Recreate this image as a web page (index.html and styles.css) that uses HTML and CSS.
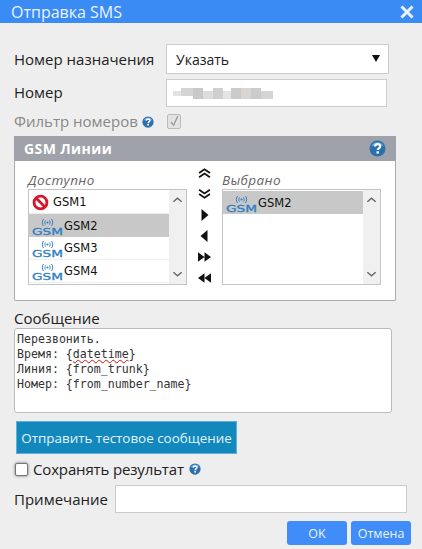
FILE: index.html

```html
<!DOCTYPE html>
<html lang="en">
<head>
    <meta charset="UTF-8">
    <meta name="viewport" content="width=device-width, initial-scale=1.0">
    <title>Отправка SMS</title>
    <link rel="stylesheet" href="styles.css">
</head>
<body>
    <svg class="defs" width="0" height="0">
        <symbol id="waves" viewBox="0 0 31 22">
            <g fill="none" stroke="#2f7fc4" stroke-width="1">
                <path d="M11.500 4c-1.500 2-1.500 5 0 7M19.500 4c1.500 2 1.500 5 0 7"/>
                <path d="M13.500 5.500c-.8 1-.8 3 0 4M17.500 5.500c.8 1 .8 3 0 4"/>
            </g>
            <circle cx="15.500" cy="7.500" r="1" fill="#2f7fc4"/>
        </symbol>
        <symbol id="help" viewBox="0 0 16 16">
            <circle cx="8" cy="8" r="7.500" fill="#2a70ad"/>
            <path d="M2 6a6.500 6.500 0 0 1 12 0c-3-1.500-9-1.500-12 0z" fill="#6fa8d8"/>
            <path d="M5.700 6.200c0-3 4.800-3 4.800-.2 0 1.800-2.300 1.800-2.300 3.500" fill="none" stroke="#fff" stroke-width="2"/>
            <rect x="7.100" y="10.600" width="2.200" height="2.200" fill="#fff"/>
        </symbol>
        <symbol id="chev-up" viewBox="0 0 12 8">
            <path d="M1.500 6L6 2l4.500 4" fill="none" stroke="#666" stroke-width="1.500"/>
        </symbol>
        <symbol id="chev-down" viewBox="0 0 12 8">
            <path d="M1.500 2L6 6l4.500-4" fill="none" stroke="#666" stroke-width="1.500"/>
        </symbol>
    </svg>

    <div class="dialog">
        <div class="title-bar">
            <span>Отправка SMS</span>
            <svg class="close" viewBox="0 0 14 14"><path d="M1.500 1.500l11 11M12.500 1.500l-11 11" stroke="#eaf3ff" stroke-width="3"/></svg>
        </div>

        <div class="content">
            <div class="row row-select">
                <label class="row-label">Номер назначения</label>
                <div class="fake-select">Указать<span class="select-arrow"></span></div>
            </div>
            <div class="row row-number">
                <label class="row-label">Номер</label>
                <div class="text-input number-input">
                    <svg class="blurred" width="100" height="14">
                        <rect x="0" y="5" width="8" height="5" fill="#e2e2e2"/>
                        <rect x="8" y="2" width="12" height="8" fill="#d4d4d4"/>
                        <rect x="20" y="2" width="10" height="11" fill="#c9c9c9"/>
                        <rect x="30" y="5" width="10" height="8" fill="#dcdcdc"/>
                        <rect x="40" y="2" width="10" height="11" fill="#cfcfcf"/>
                        <rect x="50" y="5" width="8" height="8" fill="#e4e4e4"/>
                        <rect x="58" y="2" width="10" height="11" fill="#cdcbc9"/>
                        <rect x="68" y="2" width="10" height="11" fill="#d9d5d3"/>
                        <rect x="78" y="2" width="10" height="11" fill="#c9cbcd"/>
                        <rect x="88" y="5" width="12" height="8" fill="#d4d4d4"/>
                    </svg>
                </div>
            </div>
            <div class="row row-filter">
                <label class="row-label muted">Фильтр номеров <svg class="help-small"><use href="#help"/></svg></label>
                <span class="check-disabled">
                    <svg viewBox="0 0 14 14"><path d="M3.500 7.500l3 4 5-11" fill="none" stroke="#999" stroke-width="1.500"/></svg>
                </span>
            </div>

            <div class="panel">
                <div class="panel-head">
                    <span>GSM Линии</span>
                    <svg class="help-big"><use href="#help"/></svg>
                </div>
                <div class="panel-body">
                    <div class="list-col">
                        <div class="list-title">Доступно</div>
                        <div class="list-box">
                            <div class="list-items">
                                <div class="list-item">
                                    <svg class="ban" viewBox="0 0 18 18"><circle cx="9" cy="9" r="6.800" fill="#fff" stroke="#d3182b" stroke-width="3"/><path d="M4.500 4.500l9 9" stroke="#d3182b" stroke-width="3"/></svg>
                                    <span class="ban-name">GSM1</span>
                                </div>
                                <div class="list-item selected">
                                    <svg class="gsm-icon" viewBox="0 0 31 22"><use href="#waves"/><text x="0" y="20" class="gsm-text" textLength="31" lengthAdjust="spacingAndGlyphs">GSM</text></svg>
                                    <span>GSM2</span>
                                </div>
                                <div class="list-item">
                                    <svg class="gsm-icon" viewBox="0 0 31 22"><use href="#waves"/><text x="0" y="20" class="gsm-text" textLength="31" lengthAdjust="spacingAndGlyphs">GSM</text></svg>
                                    <span>GSM3</span>
                                </div>
                                <div class="list-item">
                                    <svg class="gsm-icon" viewBox="0 0 31 22"><use href="#waves"/><text x="0" y="20" class="gsm-text" textLength="31" lengthAdjust="spacingAndGlyphs">GSM</text></svg>
                                    <span>GSM4</span>
                                </div>
                            </div>
                            <div class="scroll">
                                <svg><use href="#chev-up"/></svg>
                                <svg><use href="#chev-down"/></svg>
                            </div>
                        </div>
                    </div>
                    <div class="arrows">
                        <svg viewBox="0 0 12 10"><path d="M1 5l5-3.500L11 5M1 9l5-3.500L11 9" fill="none" stroke="#111" stroke-width="1.600"/></svg>
                        <svg viewBox="0 0 12 10"><path d="M1 1l5 3.500L11 1M1 5l5 3.500L11 5" fill="none" stroke="#111" stroke-width="1.600"/></svg>
                        <svg viewBox="0 0 12 12"><path d="M3 0l7 6-7 6z" fill="#111"/></svg>
                        <svg viewBox="0 0 12 12"><path d="M9 0L2 6l7 6z" fill="#111"/></svg>
                        <svg viewBox="0 0 14 12"><path d="M0 1l7 5-7 5zM7 1l7 5-7 5z" fill="#111"/></svg>
                        <svg viewBox="0 0 14 12"><path d="M7 1L0 6l7 5zM14 1L7 6l7 5z" fill="#111"/></svg>
                    </div>
                    <div class="list-col">
                        <div class="list-title">Выбрано</div>
                        <div class="list-box">
                            <div class="list-items">
                                <div class="list-item selected">
                                    <svg class="gsm-icon" viewBox="0 0 31 22"><use href="#waves"/><text x="0" y="20" class="gsm-text" textLength="31" lengthAdjust="spacingAndGlyphs">GSM</text></svg>
                                    <span>GSM2</span>
                                </div>
                            </div>
                            <div class="scroll">
                                <svg><use href="#chev-up"/></svg>
                                <svg><use href="#chev-down"/></svg>
                            </div>
                        </div>
                    </div>
                </div>
            </div>

            <div class="message-label">Сообщение</div>
            <div class="message">
                <div>Перезвонить.</div>
                <div>Время: {<span class="misspelled">datetime</span>}</div>
                <div>Линия: {from_trunk}</div>
                <div>Номер: {from_number_name}</div>
            </div>

            <button class="test-btn">Отправить тестовое сообщение</button>

            <div class="row row-save">
                <span class="check-box"></span>
                <label>Сохранять результат</label>
                <svg class="help-small"><use href="#help"/></svg>
            </div>

            <div class="row row-note">
                <label>Примечание</label>
                <div class="text-input note-input"></div>
            </div>

            <div class="actions">
                <button class="action-btn">OK</button>
                <button class="action-btn">Отмена</button>
            </div>
        </div>
    </div>
</body>
</html>
```

FILE: styles.css

```css
html, body {
    margin: 0;
    padding: 0;
}
body {
    width: 422px;
    height: 549px;
    overflow: hidden;
    background-color: #eeeeee;
    font-family: "Open Sans", "Noto Sans", sans-serif;
    color: #222;
}
.defs {
    position: absolute;
}
.gsm-text {
    font-family: "DejaVu Sans", sans-serif;
    font-size: 9.500px;
    stroke: #2f7fc4;
    stroke-width: 0.3px;
    fill: #2f7fc4;
}
.dialog {
    display: flex;
    flex-direction: column;
    height: 549px;
}
.title-bar {
    display: flex;
    align-items: center;
    justify-content: space-between;
    flex: none;
    height: 23px;
    padding: 0 8px 0 11px;
    background-color: #3b8bf5;
    color: #eaf3ff;
    font-size: 16px;
    line-height: 20px;
}
.close {
    width: 14px;
    height: 14px;
}
.content {
    padding: 21px 0 0 14px;
}
.row {
    display: flex;
    align-items: center;
}
.row-label {
    width: 152px;
    flex: none;
    font-size: 15px;
}
.row-select {
    height: 30px;
}
.fake-select {
    position: relative;
    width: 223px;
    height: 30px;
    box-sizing: border-box;
    padding: 0 9px;
    background-color: #fff;
    border: 1px solid #ccc;
    font-size: 14px;
    line-height: 29px;
}
.select-arrow {
    position: absolute;
    right: 8px;
    top: 10px;
    border-left: 4px solid transparent;
    border-right: 4px solid transparent;
    border-top: 7px solid #111;
}
.row-number {
    height: 28px;
    margin-top: 5px;
}
.row-number .row-label {
    margin-top: -2px;
}
.text-input {
    box-sizing: border-box;
    background-color: #fff;
    border: 1px solid #ccc;
}
.number-input {
    display: flex;
    align-items: center;
    width: 221px;
    height: 28px;
    padding-left: 6px;
}
.row-filter {
    height: 16px;
    margin-top: 6px;
}
.muted {
    color: #888;
}
.help-small {
    width: 12px;
    height: 12px;
    vertical-align: -1px;
}
.check-disabled {
    box-sizing: border-box;
    width: 14px;
    height: 15px;
    margin-left: 1px;
    background-color: #e3e3e3;
    border: 1px solid #bbb;
    border-radius: 2px;
}
.check-disabled svg {
    display: block;
    width: 12px;
    height: 13px;
}
.panel {
    box-sizing: border-box;
    width: 382px;
    height: 165px;
    margin-top: 7px;
    background-color: #fff;
    border: 1px solid #aaa;
    border-top: 0;
    border-radius: 2px;
}
.panel-head {
    display: flex;
    align-items: center;
    justify-content: space-between;
    height: 25px;
    margin: 0 -1px;
    padding: 0 10px;
    background-color: #a0a2ab;
    color: #fff;
    font-size: 14px;
    font-weight: 700;
    letter-spacing: 0.4px;
}
.help-big {
    width: 17px;
    height: 17px;
}
.panel-body {
    display: flex;
    padding: 6px 0 0 13px;
}
.list-col {
    width: 159px;
    padding-top: 4px;
}
.list-title {
    height: 18px;
    color: #666;
    font-size: 13.500px;
    font-style: italic;
    letter-spacing: 0.4px;
    line-height: 18px;
}
.list-box {
    display: flex;
    box-sizing: border-box;
    height: 96px;
    background-color: #fff;
    border: 1px solid #c4c4c4;
}
.list-items {
    flex: 1;
    padding-top: 1px;
}
.list-item {
    display: flex;
    align-items: center;
    box-sizing: border-box;
    height: 23px;
    padding-left: 3px;
    border-bottom: 1px solid #eee;
    color: #111;
    font-family: "DejaVu Sans", sans-serif;
    font-size: 11.500px;
}
.list-item.selected {
    background-color: #c8c8c8;
    border-bottom: 0;
}
.gsm-icon {
    width: 31px;
    height: 22px;
    flex: none;
    margin-right: 1px;
}
.ban {
    width: 17px;
    height: 17px;
}
.ban-name {
    margin-left: 4px;
}
.scroll {
    display: flex;
    flex-direction: column;
    align-items: center;
    justify-content: space-between;
    flex: none;
    width: 17px;
    padding: 6px 0;
    box-sizing: border-box;
    background-color: #f0f0f0;
}
.scroll svg {
    width: 11px;
    height: 8px;
}
.arrows {
    display: flex;
    flex-direction: column;
    align-items: center;
    flex: none;
    gap: 9px;
    width: 35px;
}
.arrows svg {
    width: 13px;
    height: 12px;
}
.message-label {
    margin-top: 8px;
    font-size: 15px;
    line-height: 19px;
}
.message {
    box-sizing: border-box;
    width: 378px;
    height: 85px;
    padding: 3px 2px;
    background-color: #fff;
    border: 1px solid #bbb;
    border-radius: 3px;
    color: #333;
    font-family: "DejaVu Sans Mono", monospace;
    font-size: 11.600px;
    line-height: 15px;
}
.misspelled {
    text-decoration: underline wavy #d01010 1px;
}
.test-btn {
    display: block;
    width: 221px;
    height: 33px;
    margin: 8px 0 0 2px;
    padding: 0;
    background-color: #1288bd;
    border: 1px solid #5fb0d8;
    color: #e4f4fb;
    font-family: inherit;
    font-size: 13.400px;
    white-space: nowrap;
}
.row-save {
    height: 16px;
    margin-top: 7px;
    font-size: 15px;
    letter-spacing: -0.15px;
}
.check-box {
    box-sizing: border-box;
    width: 13px;
    height: 13px;
    margin: 0 5px 0 1px;
    background-color: #fff;
    border: 1px solid #777;
    border-radius: 2px;
    box-shadow: 0 0 3px #666;
}
.row-save .help-small {
    margin-left: 5px;
}
.row-note {
    height: 28px;
    margin-top: 8px;
    font-size: 15px;
}
.note-input {
    width: 292px;
    height: 28px;
    margin-left: 7px;
}
.actions {
    display: flex;
    justify-content: flex-end;
    gap: 4px;
    margin: 8px 11px 0 0;
}
.action-btn {
    width: 60px;
    height: 24px;
    padding: 0;
    background-color: #408cf8;
    border: 0;
    border-radius: 3px;
    color: #eaf3ff;
    font-family: inherit;
    font-size: 12.500px;
}
```
